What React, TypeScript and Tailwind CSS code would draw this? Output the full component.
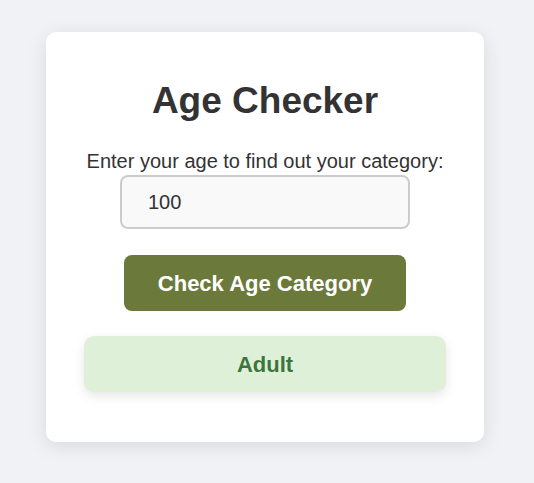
import { useState } from "react";

function getCategory(age: number): string {
    if (age < 13) return "Child";
    if (age < 20) return "Teenager";
    return "Adult";
}

export default function App() {
    const [age, setAge] = useState("100");
    const [result, setResult] = useState(getCategory(100));

    return (
        <div className="min-h-screen bg-[#f0f2f5] pt-8 pl-[46px] font-['Liberation_Sans',Arial,sans-serif] text-[#333]">
            <div className="flex w-[438px] flex-col items-center rounded-[10px] bg-white px-[38px] pt-[48px] pb-[50px] shadow-[0_4px_20px_rgba(0,0,0,0.1)]">
                <h1 className="text-[37px] leading-[42px] font-bold">Age Checker</h1>
                <label htmlFor="age" className="mt-[28px] text-[20px] leading-[23px]">
                    Enter your age to find out your category:
                </label>
                <input
                    id="age"
                    type="text"
                    value={age}
                    onChange={(e) => setAge(e.target.value)}
                    className="mt-[2px] h-[54px] w-[290px] rounded-[8px] border-2 border-[#ccc] bg-[#f9f9f9] pl-[26px] text-[20px] text-[#333] outline-none"
                />
                <button
                    onClick={() => setResult(getCategory(Number(age)))}
                    className="mt-[26px] h-[56px] w-[282px] rounded-[8px] bg-[#6b7a3a] text-[22px] font-bold text-white"
                >
                    Check Age Category
                </button>
                <div className="mt-[25px] flex h-[56px] w-full items-center justify-center rounded-[10px] bg-[#dff0d8] text-[22px] font-bold text-[#3c763d] shadow-[0_4px_12px_rgba(0,0,0,0.1)]">
                    {result}
                </div>
            </div>
        </div>
    );
}
